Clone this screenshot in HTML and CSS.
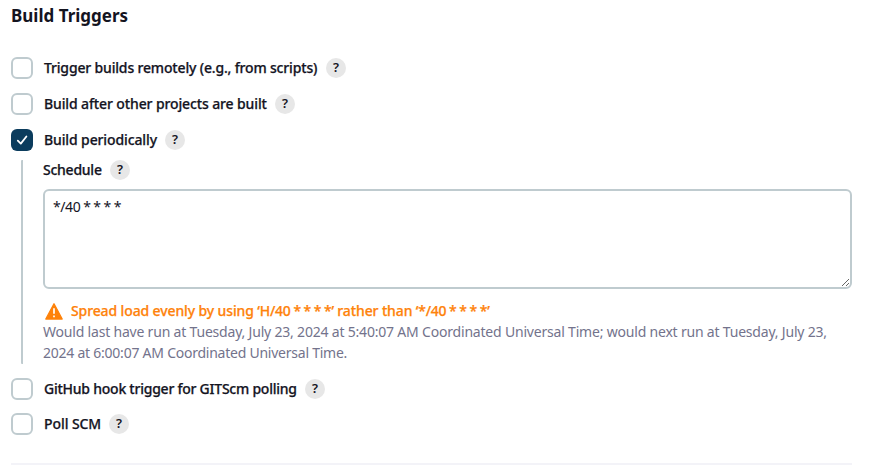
FILE: index.html
```html
<!DOCTYPE html>
<html lang="en">
<head>
<meta charset="utf-8">
<title>Build Triggers</title>
<link rel="stylesheet" href="styles.css">
</head>
<body>
<main class="section">
  <h2 class="title">Build Triggers</h2>
  <div class="row"><span class="box"></span><span class="label remote">Trigger builds remotely (e.g., from scripts)</span><span class="help">?</span></div>
  <div class="row"><span class="box"></span><span class="label after">Build after other projects are built</span><span class="help">?</span></div>
  <div class="row periodic"><span class="box checked"><svg viewBox="0 0 22 22"><path d="M6.8 11.6l3 3 5.6-7.1"/></svg></span><span class="label period">Build periodically</span><span class="help">?</span></div>
  <div class="nested">
    <div class="schedule"><span class="label sched">Schedule</span><span class="help">?</span></div>
    <textarea class="cron" spellcheck="false">*/40 * * * *</textarea>
    <div class="warning">
      <svg viewBox="0 0 18 17"><path class="triangle" d="M9 .8L17.2 16H.8z"/><path class="mark" d="M9 5.2v5.5M9 12.5v1.8"/></svg>
      <span class="warntext">Spread load evenly by using <span class="expr">‘H/40 * * * *’</span> rather than <span class="expr">‘*/40 * * * *’</span></span>
    </div>
    <p class="info"><span class="info1">Would last have run at Tuesday, July 23, 2024 at 5:40:07 AM Coordinated Universal Time; would next run at Tuesday, July 23,</span><br><span class="info2">2024 at 6:00:07 AM Coordinated Universal Time.</span></p>
  </div>
  <div class="row github"><span class="box"></span><span class="label hook">GitHub hook trigger for GITScm polling</span><span class="help">?</span></div>
  <div class="row poll"><span class="box"></span><span class="label scm">Poll SCM</span><span class="help">?</span></div>
</main>
</body>
</html>
```
FILE: styles.css
```css
* { box-sizing: border-box; }
body { margin: 0; background: #fff; color: #14141f; font: 14px/21px "Noto Sans", "Open Sans", sans-serif; }
.section { width: 852px; height: 465px; padding: 4px 0 0 11px; position: relative; }
.section::after { content: ""; position: absolute; left: 11px; right: 0; bottom: 0; height: 2px; background: #f3f3f8; }
.title { margin: 0 0 29px; font-size: 17px; line-height: 24px; font-weight: 700; letter-spacing: 0; }
.row { display: flex; align-items: center; height: 22px; margin-bottom: 14px; }
.box { flex: none; width: 22px; height: 22px; margin-right: 11px; border: 2px solid #bfcbcf; border-radius: 6px; }
.checked { border: 0; background: #0b3c5d; }
.checked svg { display: block; width: 22px; height: 22px; fill: none; stroke: #fff; stroke-width: 1.8; stroke-linecap: round; stroke-linejoin: round; }
.label { padding-bottom: 2px; white-space: nowrap; font-weight: 500; -webkit-text-stroke: .25px currentColor; }
.help { flex: none; width: 20px; height: 20px; margin-left: 8px; border-radius: 50%; background: #e7e7e7; text-align: center; font-size: 13px; line-height: 19px; font-weight: 600; }
.remote { width: 274px; letter-spacing: -.165px; }
.after { width: 223px; letter-spacing: -.12px; }
.period { width: 113px; letter-spacing: -.12px; }
.sched { width: 59px; letter-spacing: -.25px; }
.hook { width: 253px; letter-spacing: -.24px; }
.scm { width: 57px; letter-spacing: -.08px; }
.periodic { margin-bottom: 9px; }
.nested { height: 204px; margin-left: 10px; padding-left: 20px; border-left: 2px solid #bfcbcf; border-radius: 1px; }
.schedule { display: flex; align-items: center; height: 20px; margin-bottom: 9px; }
.cron { display: block; width: 809px; height: 100px; margin: 0; padding: 5px 8px; border: 2px solid #bfcbcf; border-radius: 6px; resize: vertical; background: #fff; color: #14141f; font: inherit; letter-spacing: -.4px; word-spacing: -.4px; }
.warning { display: flex; height: 21px; margin-top: 11px; color: #fe820a; font-weight: 500; -webkit-text-stroke: .25px currentColor; }
.warning svg { width: 18px; height: 17px; margin: 3px 8px 0 2px; }
.triangle { fill: #fe820a; stroke: #fe820a; stroke-width: 1.3; stroke-linejoin: round; }
.mark { fill: none; stroke: #fff; stroke-width: 1.7; }
.warntext { white-space: nowrap; letter-spacing: -.12px; }
.expr { letter-spacing: -.25px; word-spacing: -.6px; }
.info { margin: 0; color: #73738c; white-space: nowrap; }
.info1 { letter-spacing: -.195px; }
.info2 { letter-spacing: -.24px; }
.github { margin: 14px 0 13px; }
.poll { margin: 0; }
```
